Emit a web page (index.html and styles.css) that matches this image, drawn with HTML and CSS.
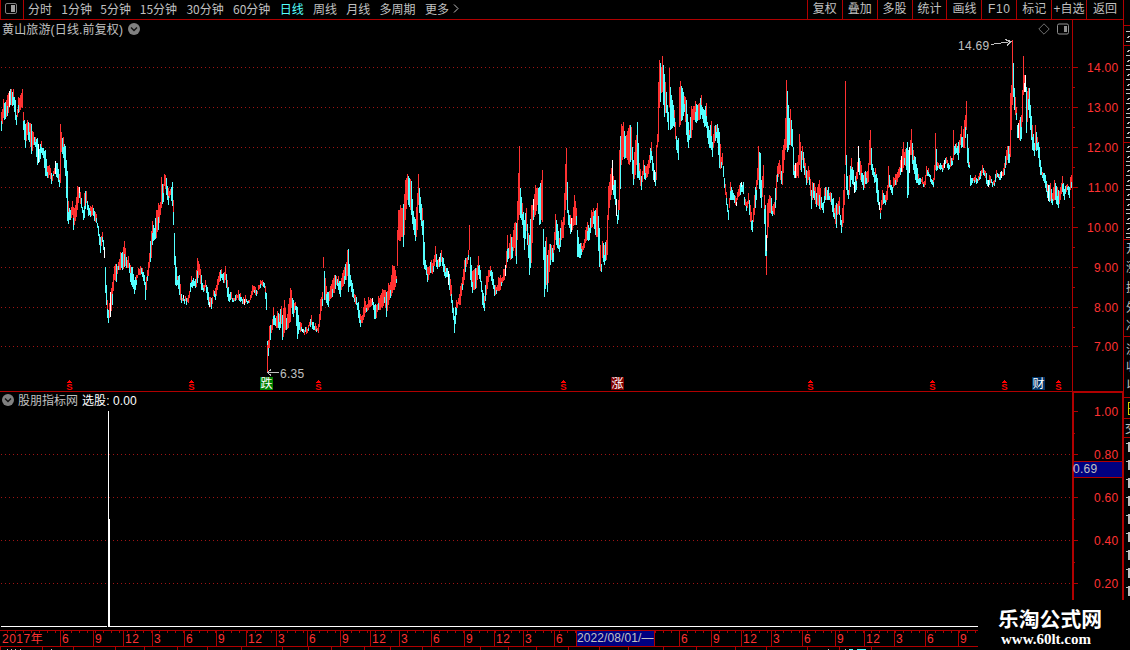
FILE: index.html
```
<!DOCTYPE html>
<html lang="zh-CN">
<head>
  <meta charset="UTF-8" />
  <title>黄山旅游 日线</title>
  <link rel="stylesheet" href="styles.css">
</head>
<body>
  <div class="app">
    <div class="main">
      <header class="toolbar">
        <div class="layout-btn">
          <svg width="12" height="11" viewBox="0 0 12 11"><rect x=".5" y=".5" width="11" height="10" rx="1.5" fill="none" stroke="#808080"/><rect x="6" y="2" width="4" height="7" fill="#a0a0a0"/></svg>
        </div>
        <nav class="periods">
          <span>分时</span><span>1分钟</span><span>5分钟</span><span>15分钟</span><span>30分钟</span><span>60分钟</span><span class="active">日线</span><span>周线</span><span>月线</span><span>多周期</span><span>更多<svg class="more" width="6" height="9" viewBox="0 0 6 9"><path d="M1 .5L5 4.5L1 8.5" fill="none" stroke="#c0c0c0"/></svg></span>
        </nav>
        <nav class="tools">
          <span>复权</span><span>叠加</span><span>多股</span><span>统计</span><span>画线</span><span class="wide">F10</span><span>标记</span><span>+自选</span><span>返回</span>
        </nav>
      </header>

      <section class="price">
        <div class="plot">
          <div class="title">
            <span class="stock">黄山旅游(日线.前复权)</span>
            <svg width="12" height="12" viewBox="0 0 12 12"><circle cx="6" cy="6" r="6" fill="#808080"/><path d="M3 4.5L6 7.5L9 4.5" fill="none" stroke="#111" stroke-width="1.4"/></svg>
            <svg class="corner" width="32" height="12" viewBox="0 0 32 12"><path d="M6 .8L11.2 6L6 11.2L.8 6Z" fill="none" stroke="#707070"/><rect x="19.5" y="1" width="11" height="10" rx="1.5" fill="none" stroke="#909090"/><rect x="26" y="3" width="3" height="6" fill="#909090"/></svg>
          </div>
          <svg class="canvas" id="priceChart" width="1072" height="371" viewBox="0 20 1072 371" shape-rendering="crispEdges"></svg>
        </div>
        <svg class="axis" id="priceAxis" width="51" height="371" viewBox="1072 20 51 371" shape-rendering="crispEdges"></svg>
      </section>

      <section class="indicator">
        <div class="plot">
          <div class="title">
            <svg width="12" height="12" viewBox="0 0 12 12"><circle cx="6" cy="6" r="6" fill="#808080"/><path d="M3 4.5L6 7.5L9 4.5" fill="none" stroke="#111" stroke-width="1.4"/></svg>
            <span>股朋指标网</span><span class="value">选股: 0.00</span>
          </div>
          <svg class="canvas" id="signalChart" width="1072" height="238" viewBox="0 392 1072 238" shape-rendering="crispEdges"></svg>
        </div>
        <svg class="axis" id="signalAxis" width="52" height="209" viewBox="1072 391 52 209" shape-rendering="crispEdges"></svg>
      </section>

      <footer class="timeline">
        <div class="months" id="months"></div>
        <svg width="978" height="3" viewBox="0 0 978 3" id="lowerTicks" shape-rendering="crispEdges"></svg>
      </footer>
    </div>

    <svg class="side" id="side" width="8" height="600" viewBox="1122 0 8 600" shape-rendering="crispEdges"></svg>

    <div class="brand">
      <b>乐淘公式网</b>
      <span>www.60lt.com</span>
    </div>
  </div>
  <script src="chart.js"></script>
</body>
</html>
```
FILE: styles.css
```
* {
  box-sizing: border-box;
}

body {
  margin: 0;
  background: #000;
  color: #c0c0c0;
  font-family: "Liberation Sans", "Noto Sans CJK SC", sans-serif;
  font-size: 12px;
  overflow: hidden;
}

svg {
  display: block;
}

.app {
  position: relative;
  display: flex;
  width: 1130px;
  height: 650px;
  overflow: hidden;
}

.main {
  width: 1122px;
  flex: none;
}

/* top bar */
.toolbar {
  display: flex;
  width: 1124px;
  height: 20px;
  border: solid #b00000;
  border-width: 0 1px 1px;
  line-height: 19px;
  white-space: nowrap;
}

.layout-btn {
  width: 23px;
  padding: 3px 0 0 4px;
  border-right: 1px solid #b00000;
}

.periods {
  display: flex;
  gap: 9.3px;
  padding-left: 4px;
  font-family: "Noto Sans CJK SC", sans-serif;
  line-height: 18px;
}

.periods span {
  display: flex;
}

.periods span:nth-child(2) {
  margin-right: -1px;
}

.periods span:nth-child(3) {
  margin-right: -.5px;
}

.active {
  color: #54ffff;
}

.more {
  margin: 4px 0 0 4px;
}

.tools {
  display: flex;
  margin-left: auto;
}

.tools span {
  width: 34.9px;
  border-left: 1px solid #b00000;
  text-align: center;
}

.tools span:last-child {
  width: 37px;
}

.tools .wide {
  letter-spacing: .7px;
}

/* panels */
.price,
.indicator {
  display: flex;
}

.price {
  height: 371px;
}

.indicator {
  height: 239px;
}

.plot {
  position: relative;
  width: 1072px;
  flex: none;
  border-top: 0 solid #b00000;
}

.indicator .plot {
  border-top-width: 1px;
}

.canvas {
  position: absolute;
  left: 0;
  bottom: 0;
}

.axis {
  flex: none;
  overflow: visible;
}

.title {
  display: flex;
  align-items: center;
  gap: 5px;
  height: 18px;
  padding: 0 2px;
}

.title span {
  margin-top: -2px;
}

.stock {
  letter-spacing: .15px;
}

.title .corner {
  margin-left: auto;
}

.indicator .title {
  gap: 4px;
  height: 16px;
}

.title .value {
  color: #fff;
  letter-spacing: .1px;
}

svg text {
  font-size: 12px;
}

.scale {
  fill: #ff3232;
  font-size: 12px;
  letter-spacing: .3px;
  text-anchor: end;
}

.note {
  fill: #c0c0c0;
  letter-spacing: .3px;
}

svg .badge {
  fill: #fff;
  font-size: 12px;
  text-anchor: middle;
}

svg .mark {
  fill: #f00;
  font-size: 9.5px;
  font-weight: bold;
  text-anchor: middle;
}

/* dates */
.timeline {
  width: 978px;
}

.months {
  display: flex;
  height: 17px;
  border: solid #b00000;
  border-width: 1px 0;
  background: repeating-linear-gradient(90deg, transparent 0 7px, #b00000 7px 8px) 0 0 / 100% 2px no-repeat;
  color: #ff3232;
  line-height: 16px;
}

.month {
  flex: none;
  padding-left: 1px;
  border-left: 1px solid #b00000;
  white-space: nowrap;
  letter-spacing: .5px;
}

.month:first-child {
  border-left-color: transparent;
}

.month.cursor {
  background: #000080;
  color: #c0c0c0;
  padding-left: 0;
  line-height: 15px;
  letter-spacing: .1px;
}

.side {
  flex: none;
}

.side text {
  fill: #c0c0c0;
}

/* site mark, laid over the lower right corner */
.brand {
  position: absolute;
  right: 0;
  bottom: 0;
  width: 152px;
  height: 50px;
  padding: 3px 0 0 20px;
  background: #000;
  color: #fff;
}

.brand b {
  display: block;
  font: bold 20.8px/30px "Noto Sans CJK SC", sans-serif;
}

.brand span {
  display: block;
  margin-top: -2px;
  padding-left: 3px;
  font: bold 15px/16px "Liberation Serif", serif;
}
```
FILE: chart.js
```
const RED = '#ff3232';
const CYAN = '#54ffff';
const LINE = '#b00000';

// x,high,low for the daily bars
const bars = `1,112,131 3,99,118 5,102,119 7,95,116 9,91,107 11,89,105 13,89,105 15,100,120 16,115,125 18,97,113 20,95,110 22,89,108 23,112,130 25,124,148 27,120,135 29,123,142 31,124,154 33,132,145 35,137,147 37,138,165 39,149,162 41,141,153 43,148,158 45,150,176 47,166,178 49,165,175 51,173,184 53,171,176 55,161,174 57,163,178 59,174,187 60,124,183 61,132,152 63,137,158 65,146,176 67,171,221 68,201,224 70,210,220 72,201,215 73,207,230 75,205,221 77,186,210 79,187,198 81,198,208 83,210,220 84,193,218 86,191,203 88,205,216 90,206,217 92,205,215 94,211,221 96,214,223 98,226,236 100,237,253 102,232,242 104,247,258 105,267,293 107,300,318 108,310,323 110,292,317 112,282,305 114,266,280 116,264,282 118,262,270 120,252,270 122,252,270 124,241,267 126,257,268 128,256,268 130,265,282 132,267,287 134,280,294 136,275,285 138,268,275 140,266,275 142,268,277 144,275,285 145,282,300 147,270,281 149,253,268 151,231,258 152,221,245 154,228,240 156,210,238 158,203,230 160,202,215 161,177,208 163,184,202 164,174,186 166,178,195 168,188,205 170,189,195 172,182,206 173,200,225 174,233,265 175,256,285 177,276,285 179,275,295 181,294,303 183,295,301 186,298,305 189,291,298 191,276,287 193,278,286 195,279,288 197,258,283 199,264,275 201,275,290 203,285,292 205,280,287 207,287,300 209,297,307 211,298,309 213,290,296 215,288,300 217,279,290 219,272,282 221,269,278 223,273,283 225,266,280 227,280,297 229,294,302 231,292,299 233,298,302 236,294,300 238,290,300 240,293,302 242,299,304 245,295,303 248,300,303 250,295,300 252,285,295 254,286,293 256,290,296 258,285,290 260,280,288 262,280,286 264,283,288 265,286,299 266,293,310
267,341,372 268,340,356 269,326,348 271,325,333 273,307,325 275,318,326 277,311,328 279,314,330 281,306,324 282,315,340 284,300,333 286,318,330 288,304,328 290,288,322 291,290,308 293,300,317 295,302,310 297,307,339 299,322,330 301,323,331 303,329,333 306,327,334 308,325,331 311,315,325 313,322,330 316,326,332 318,324,333 320,299,320 322,292,306 323,257,268 324,271,300 326,286,303 328,292,307 330,286,299 332,280,297 334,275,293 336,276,285 338,276,290 340,281,297 342,273,287 344,267,284 346,262,280 347,250,276 348,249,292 350,275,286 352,283,297 354,294,302 356,297,305 358,302,318 360,314,327 362,315,323 364,298,317 366,305,312 368,297,310 370,298,307 372,298,305 374,305,319 376,305,318 378,296,310 380,295,310 382,289,308 384,290,303 386,292,317 388,283,305 390,282,298 392,265,293 394,266,290 396,276,283 397,230,266 398,210,240 400,205,241 402,208,237 403,204,247 405,180,220 407,174,200 409,178,207 411,181,215 413,211,230 415,219,241 417,193,230 418,174,205 420,197,220 422,208,235 423,220,265 425,260,270 427,267,282 429,266,275 431,260,273 433,259,272 435,246,262 437,260,269 439,257,267 441,250,262 443,258,272 445,266,278 447,268,277 449,274,290 451,285,303 453,308,320 454,316,333 456,300,315 458,298,304 460,286,305 462,277,290 464,260,280 466,258,267 468,250,260 469,225,250 470,257,280 472,271,293 474,269,290 476,268,288 478,256,275 480,270,282 482,290,305 484,296,311 486,276,295 488,270,282 490,266,276 492,272,285 494,285,296 496,287,294 498,277,291 500,275,290
501,278,286 503,269,281 505,265,276 507,235,262 508,248,259 510,234,260 512,237,258 514,223,248 516,223,264 518,173,220 519,146,215 520,188,218 522,203,225 524,220,250 526,208,231 528,233,258 529,235,275 531,205,263 533,199,220 535,185,215 537,188,205 539,187,225 541,180,220 542,170,222 543,229,260 544,247,297 546,237,285 547,255,292 549,244,272 551,245,260 553,245,262 555,214,240 557,224,248 559,238,252 561,220,240 563,217,238 565,164,210 566,148,200 568,210,225 570,215,234 572,218,230 574,195,225 576,208,225 577,230,257 579,244,258 581,243,255 583,243,250 585,230,243 587,222,240 589,228,240 591,210,228 593,208,224 595,210,235 597,203,237 599,228,267 601,264,272 602,241,258 604,245,265 606,240,260 607,215,255 608,186,220 610,174,200 612,160,190 613,176,195 615,180,205 617,215,224 618,200,220 619,150,210 621,124,165 623,122,157 625,136,158 627,131,160 629,125,165 631,127,160 633,160,185 635,140,175 636,135,165 637,122,178 639,163,180 641,176,190 643,160,175 645,166,180 647,164,177 649,155,168 651,142,160 653,163,180 655,172,186 656,145,180 657,134,147 658,82,142 659,60,108 661,67,93 662,56,92 664,74,117 666,92,113 668,112,130 669,68,107 670,87,130 672,100,128 674,110,127 676,136,150 678,138,160 679,87,127 680,81,125 682,88,120 684,96,112 686,100,135 688,122,148 689,130,140 691,106,138 693,106,120 695,101,122 697,105,121 699,103,120 701,95,115 702,107,119 704,110,127 706,103,128 707,122,138 709,130,148 711,121,150 712,142,157 714,126,143 716,125,138 717,124,143 719,132,168 721,157,168 722,153,165 724,178,188 726,192,205 727,204,212 728,210,220 730,182,200 732,190,200 734,195,203 736,198,206 737,192,200 739,185,196 741,182,192 743,182,194 744,197,205 746,202,211 748,193,204 749,200,215 751,212,230 752,220,232 754,195,215 756,180,200 757,168,185 758,146,180 760,153,198 761,180,208 763,165,188
764,195,224 765,205,256 766,235,275 767,203,238 769,195,213 771,198,214 772,206,216 774,202,215 776,175,200 777,166,182 779,160,174 781,171,184 782,150,185 784,139,160 785,118,150 786,80,148 787,91,152 789,118,145 790,109,145 792,129,147 793,147,175 794,165,178 796,163,178 798,155,178 799,134,165 801,151,172 802,146,160 804,158,175 806,170,185 808,166,180 809,170,185 811,190,209 812,182,200 814,183,200 816,193,207 817,187,205 819,180,209 821,197,208 823,202,213 824,188,203 826,187,200 828,187,200 829,193,200 831,193,205 833,198,217 834,208,219 836,203,228 837,204,215 839,197,215 840,215,225 841,220,233 843,190,223 844,174,205 845,81,165 846,155,190 848,190,199 849,175,195 851,158,180 853,170,185 854,182,193 856,172,190 858,146,172 859,158,175 861,165,182 863,175,190 864,172,188 866,172,184 868,163,182 869,140,165 870,130,165 872,164,175 874,172,183 875,168,182 877,178,202 879,202,210 880,208,219 882,190,205 884,195,203 885,195,205 887,185,200 888,166,188 890,180,190 892,187,195 893,177,188 895,174,185 897,172,182 898,169,178 900,160,175 902,149,172 903,142,168 904,152,165 906,148,170 907,142,198 908,150,195 910,140,155 911,129,155 913,150,170 915,157,180 917,168,183 918,174,185 920,178,184 922,177,184 923,182,187 925,175,185 926,166,176 928,168,176 930,175,182 932,180,185 933,178,187 934,165,180 935,133,170 937,162,170 938,163,168 940,163,170 942,165,172 944,160,168 946,157,163 947,160,168 949,165,169 950,156,167 952,158,165 953,130,160 954,146,155 956,143,153 958,142,160 960,134,145 961,126,148 962,137,147 964,120,148 965,115,138 966,101,130 967,134,163 969,162,168 970,175,186 972,178,183 974,177,183 975,175,182 977,179,183 979,173,180 981,170,176 982,165,173 984,170,176 986,173,184 988,180,187 989,175,185 991,179,183 992,182,187 994,180,186 996,170,178 997,173,177 999,174,180 1001,171,178 1002,172,176 1004,163,175 1006,150,165 1007,146,160 1009,146,163 1010,93,157 1011,85,130 1012,40,105 1013,63,97 1014,88,110 1016,107,120 1017,125,138 1019,120,140 1021,115,139 1022,90,122 1023,56,95 1024,75,92 1025,75,92 1026,87,133 1028,88,110 1029,88,118 1030,105,130 1032,125,150 1034,143,156 1035,125,150 1037,137,150 1039,147,167 1040,160,175 1042,172,178 1044,173,183 1045,175,188 1047,184,198 1049,185,202 1050,183,201 1052,193,205 1054,180,200 1055,183,200 1057,187,205 1058,190,208 1060,187,200 1062,176,192 1064,189,200 1066,185,192 1067,184,190 1069,187,198 1070,177,190 1071,175,188`
  .split(/\s+/).map(b => b.split(',').map(Number));

const whites = [9, 38, 55, 79, 104, 110, 183, 209, 244, 302, 372, 439, 448, 505, 533, 571, 612, 616, 654, 736, 741, 795, 854, 858, 879, 901, 909, 944, 988, 1001, 1018, 1024, 1025, 1048];

const rect = (x, y, w, h, c) => `<rect x="${x}" y="${y}" width="${w}" height="${h}" fill="${c}"/>`;
const text = (x, y, cls, s) => `<text x="${x}" y="${y}" class="${cls}">${s}</text>`;
const dots = (y) => `<path d="M1 ${y}.5H1071" stroke="#a01414" stroke-dasharray="1 3"/>`;
const put = (id, s) => { document.getElementById(id).innerHTML = s; };

function drawBars() {
  let out = '';
  bars.forEach(([x, hi, lo], i) => {
    const next = bars[i + 1] || bars[i];
    const prev = bars[i - 1] || bars[i];
    const up = hi + lo < prev[1] + prev[2];
    const color = whites.includes(x) ? '#fff' : up ? RED : CYAN;
    out += rect(x, hi, 1, lo - hi, color);
    // the other colour shows at one end of some bars
    if (i % 3 === 0 && lo - hi < 30) out += rect(x, up ? lo - (lo - hi >> 1) : hi, 1, lo - hi >> 1, up ? CYAN : RED);
    for (let n = x + 1; n < next[0]; n++) {
      const top = Math.round((hi + next[1]) / 2 + (n * 7 % 5) - 1);
      const end = Math.round((lo + next[2]) / 2 - (n * 3 % 4) + 1);
      const rising = hi + lo > next[1] + next[2];
      const flip = n % 5 === 0;
      out += rect(n, top, 1, Math.max(end - top, 3), whites.includes(n) ? '#fff' : rising !== flip ? RED : CYAN);
    }
  });
  // the two bars that run past a white or cyan body
  return out + rect(766, 256, 1, 19, RED) + rect(766, 235, 1, 16, '#fff') + rect(267, 345, 1, 27, RED);
}

function sMark(x) {
  return `<path d="M${x - 2} 382.5h5M${x - 1} 381.5h3M${x} 380.5h1" stroke="#f00"/>` + text(x + .5, 390, 'mark', 'S');
}

function badge(x, color, s) {
  return rect(x, 377, 13, 13, color) + text(x + 6.5, 388, 'badge', s);
}

const priceRows = [67, 107, 147, 187, 227, 267, 307, 346];
put('priceChart',
  priceRows.map(dots).join('') + drawBars() +
  text(958, 50, 'note', '14.69') +
  '<path d="M991 44.5L1011 41.5M1005 39.5L1011 41.5L1007 45.5" fill="none" stroke="#c0c0c0"/>' +
  text(280, 378, 'note', '6.35') +
  '<path d="M267 372.5H279M271 369.5L267.5 372.5L271 375.5" fill="none" stroke="#c0c0c0"/>' +
  [69, 191, 318, 563, 810, 932, 1004, 1058].map(sMark).join('') +
  badge(260, '#008000', '跌') + badge(611, '#800000', '涨') + badge(1032, '#003366', '财'));

put('priceAxis', rect(1072, 20, 1, 371, LINE) +
  priceRows.map((y, i) => rect(1073, y, 5, 1, LINE) + (i < 7 ? rect(1073, y + 20, 2, 1, LINE) : '') +
    text(1118.5, y + 5, 'scale', (14 - i).toFixed(2))).join(''));

put('signalChart', [454, 497, 540, 583].map(dots).join('') +
  rect(1, 626, 106, 1, '#fff') + rect(108, 411, 1, 216, '#fff') +
  rect(109, 519, 1, 108, '#fff') + rect(109, 626, 869, 1, '#fff'));

put('signalAxis', rect(1072, 391, 52, 2, LINE) + rect(1072, 391, 2, 209, LINE) + rect(1122, 391, 2, 209, LINE) +
  [411, 454, 497, 540, 583].map((y, i) => rect(1074, y, 4, 1, LINE) + (i < 4 ? rect(1074, y + 22, 1, 1, LINE) : '') +
    text(1118.5, y + 5, 'scale', (1 - i * .2).toFixed(2))).join('') +
  rect(1074, 461, 48, 17, '#000080') + rect(1074, 461, 48, 1, LINE) + rect(1074, 477, 48, 1, LINE) +
  text(1073, 473, 'note', '0.69'));

// [left edge, label]
const months = [[0, '2017年'], [60, 6], [93, 9], [123, 12], [152, 3], [184, 6], [216, 9], [246, 12], [276, 3],
  [307, 6], [340, 9], [370, 12], [399, 3], [431, 6], [464, 9], [494, 12], [523, 3], [554, 6],
  [576, '2022/08/01/—'], [654, ''], [679, 6], [711, 9], [741, 12], [771, 3], [802, 6], [835, 9],
  [864, 12], [894, 3], [925, 6], [958, 9], [978]];
put('months', months.slice(0, -1).map(([x, label], i) =>
  `<div class="month${x === 576 ? ' cursor' : ''}" style="width:${months[i + 1][0] - x}px">${label}</div>`).join(''));

put('lowerTicks', [0, 42, 73, 115, 144, 177, 207, 241, 282, 308, 331, 364, 390, 422, 480, 508, 536, 568, 599, 628, 663, 696, 735, 766, 807, 839, 871]
  .map(x => rect(x, 0, 1, 3, LINE)).join('') +
  [7, 11, 15, 20, 51, 828, 845].map(x => rect(x, 2, 1, 1, '#c0c0c0')).join('') +
  rect(849, 2, 4, 1, CYAN) + rect(857, 2, 9, 1, CYAN));

// left edge of the quote column
let side = rect(1123, 0, 1, 391, LINE) + rect(1122, 391, 2, 209, LINE);
[25, 45, 142, 239, 336, 397, 418, 437].forEach(y => { side += rect(1124, y, 6, 1, LINE); });
for (let y = 31; y < 238; y += 4.8) {
  const row = Math.round(y);
  if (Math.abs(row - 45) < 3 || Math.abs(row - 142) < 3) continue;
  side += row % 2 ? rect(1126, row, 4, 1, '#c0c0c0') : rect(1128, row, 2, 1, '#c0c0c0') + rect(1127, row + 1, 2, 1, '#c0c0c0');
}
['开', '涨', '换', '外', '净', '流', '收', '以'].forEach((s, i) => {
  side += text(1126, [253, 272, 292, 312, 330, 354, 371, 389][i], '', s);
});
side += '<path d="M1130 402.5H1128.5V414.5H1130M1128 408.5H1130" fill="none" stroke="#d0d000"/>';
side += text(1125, 433, '', '交');
for (let y = 442; y < 600; y += 18) side += rect(1128, y, 2, 10, '#c0c0c0') + rect(1126, y + 1, 2, 1, '#c0c0c0');
put('side', side);
```
